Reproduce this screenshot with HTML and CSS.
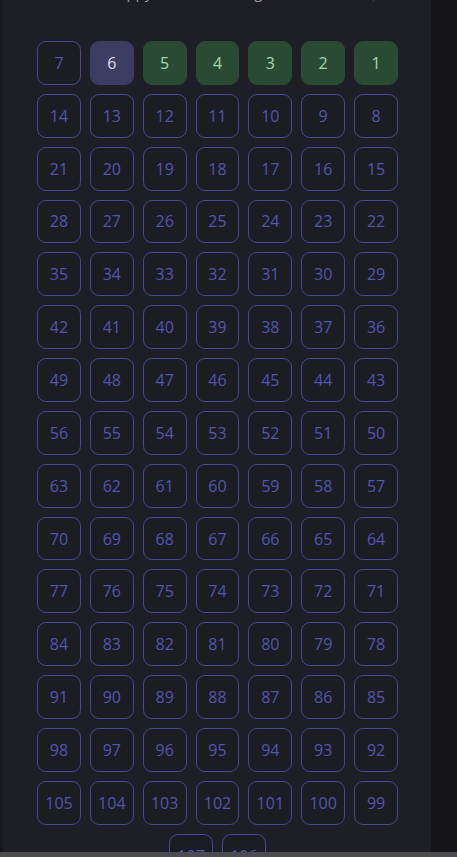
FILE: index.html
```html
<!DOCTYPE html>
<html>
<head>
<meta charset="utf-8">
<link rel="stylesheet" href="styles.css">
</head>
<body>
<div class="layout">
  <div class="edge"></div>
  <main class="panel">
    <p class="lead">Tick the happy ones that bring a smile home 🧡</p>
    <div class="grid" id="grid"></div>
  </main>
  <div class="aside"></div>
</div>
<div class="hbar"></div>
<script>
  var g = document.getElementById('grid');
  for (var i = 1; i <= 107; i++) {
    var c = document.createElement('div');
    c.className = 'cell' + (i === 6 ? ' current' : (i < 6 ? ' done' : ''));
    c.textContent = i;
    g.appendChild(c);
  }
</script>
</body>
</html>
```
FILE: styles.css
```css
html, body {
  margin: 0;
  padding: 0;
  height: 100%;
  overflow: hidden;
  background: #131318;
  font-family: "Open Sans", "Noto Sans", sans-serif;
}
.layout {
  display: flex;
  height: 852px;
}
.edge {
  width: 3px;
  background: #17171c;
}
.panel {
  width: 428px;
  background: #1e1e26;
  overflow: hidden;
}
.aside {
  flex: 1;
  background: #131318;
}
.lead {
  margin: -18px 0 0 0;
  height: 20px;
  font-size: 15px;
  line-height: 20px;
  color: #9a9aa8;
  text-align: center;
}
.grid {
  width: 361px;
  margin: 39px 0 0 34px;
  display: flex;
  flex-direction: row-reverse;
  flex-wrap: wrap;
  justify-content: center;
  gap: 9px;
}
.cell {
  box-sizing: border-box;
  width: 43.85px;
  height: 43.85px;
  border: 1px solid #474996;
  border-radius: 9px;
  background: #1c1c23;
  display: flex;
  align-items: center;
  justify-content: center;
  font-size: 16px;
  color: #5256b0;
}
.cell.current {
  background: #3c3d63;
  border-color: #3c3d63;
  color: #dcdcec;
}
.cell.done {
  background: #2b4a34;
  border-color: #2b4a34;
  color: #a8d6b0;
}
.hbar {
  height: 5px;
  background: #4b4b50;
}
```
